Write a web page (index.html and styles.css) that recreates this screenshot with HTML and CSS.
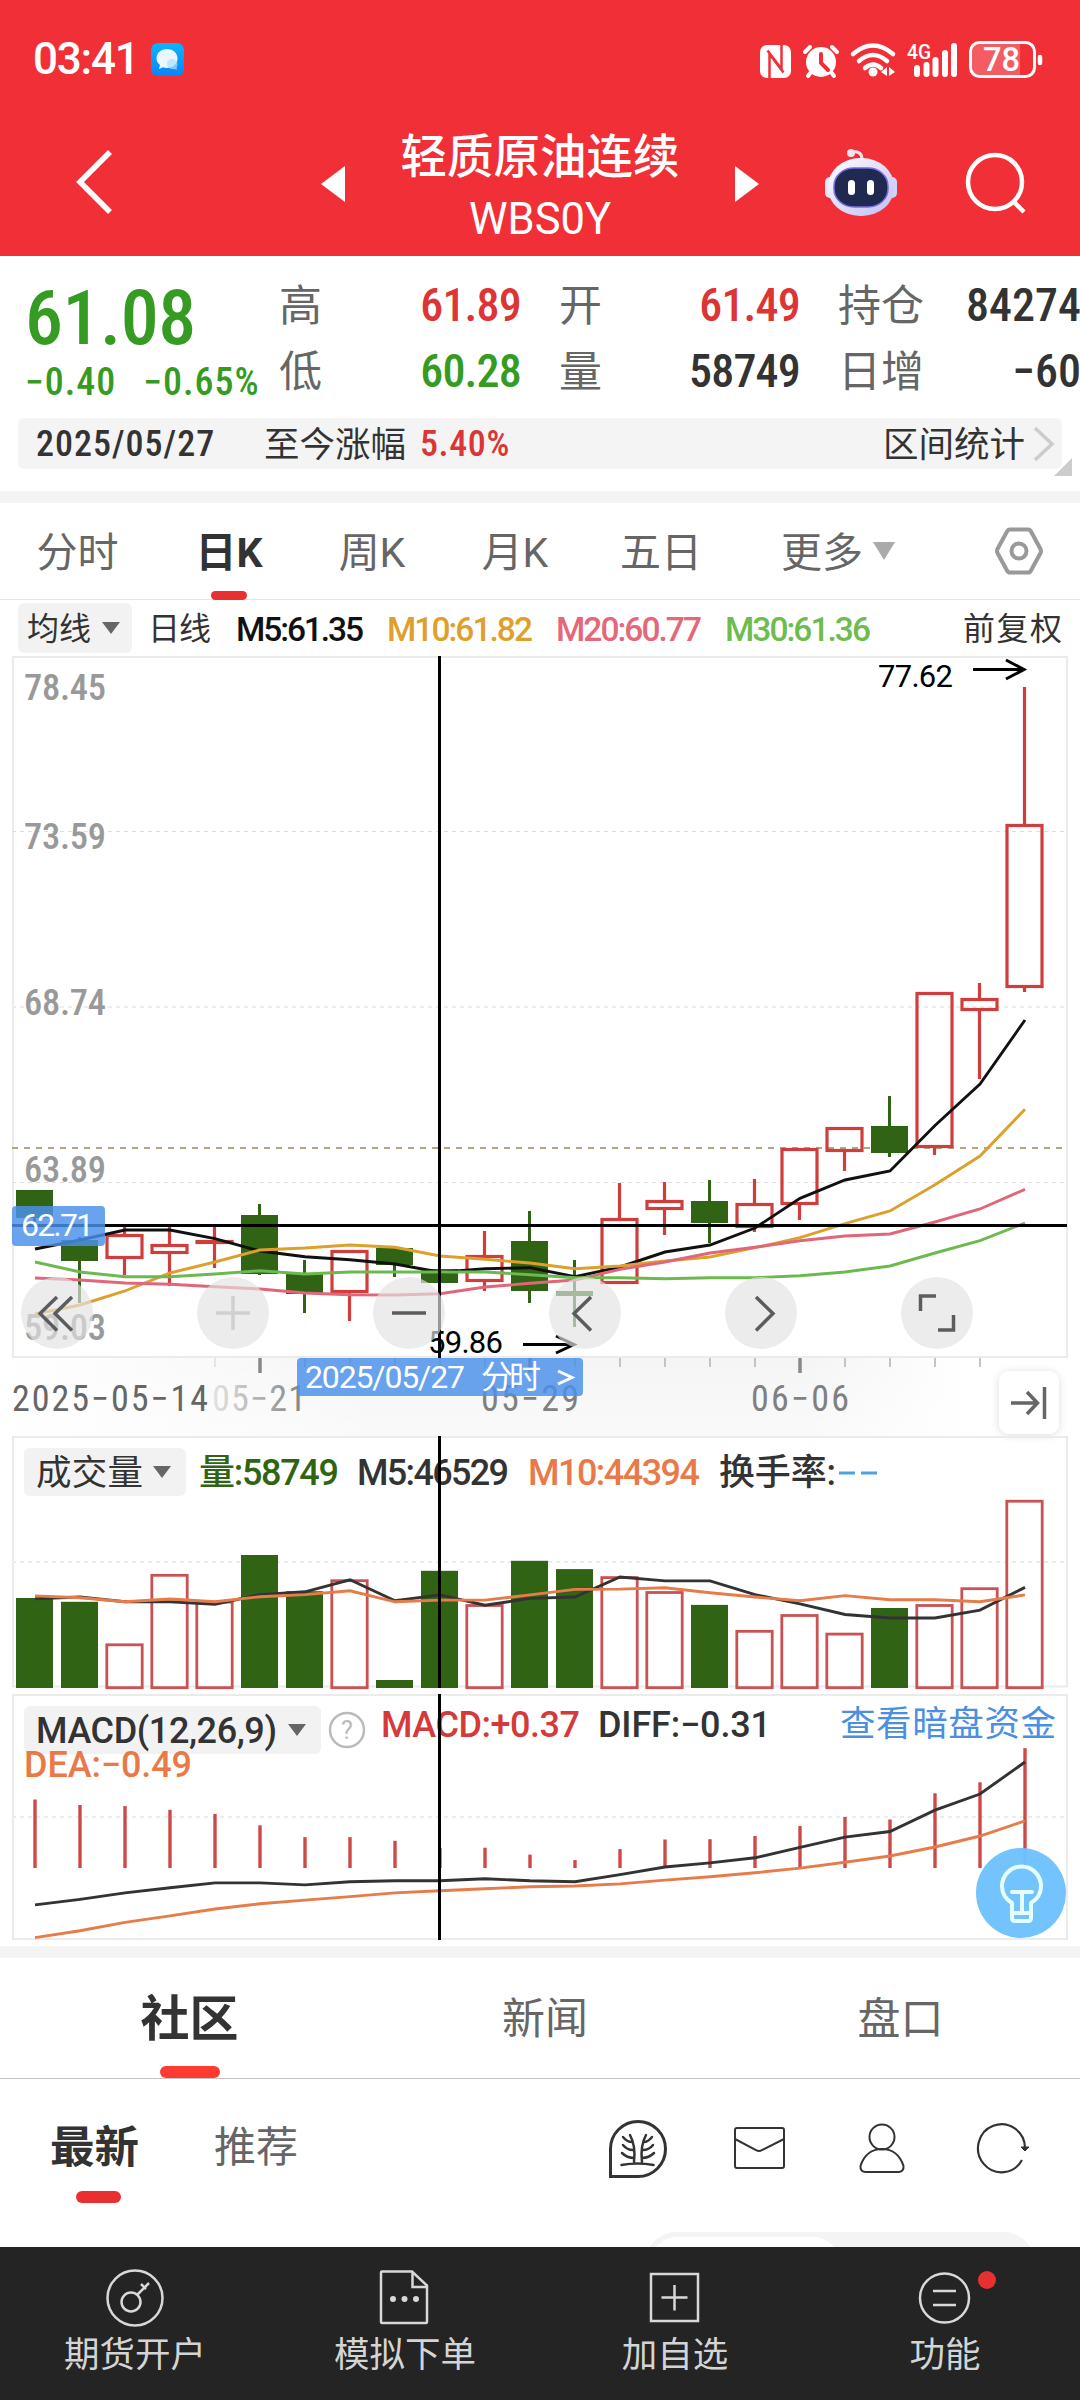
FILE: index.html
```html
<!DOCTYPE html>
<html lang="zh-CN">
  <head>
    <meta charset="UTF-8" />
    <meta name="viewport" content="width=device-width, initial-scale=1.0" />
    <title>轻质原油连续 WBS0Y</title>
    <link rel="stylesheet" href="styles.css">
  </head>
  <body>
    <header class="header">
      <div class="status-bar">
        <span class="clock">03:41</span>
        <svg class="app-icon" width="33" height="33" viewBox="0 0 33 33">
          <defs>
            <linearGradient id="appBg" x1="0" y1="0" x2="0" y2="1">
              <stop offset="0" stop-color="#0cb4fb" />
              <stop offset="1" stop-color="#0a84fb" />
            </linearGradient>
          </defs>
          <rect width="33" height="33" rx="7" fill="url(#appBg)" />
          <path d="M16 6c6 0 10.500 4 10.500 9.500S22 25 16 25c-1.500 0-3-.3-4-.7L8 26l1-4c-2.300-1.700-3.500-4-3.500-6.500C5.500 10 10 6 16 6z" fill="#e9f8ff" />
          <path d="M16 21c0-3 2-5 5-5s5.500 2 5.500 5c0 2-.5 3-1 4l.5 2-2.500-1C19 26.500 16 24 16 21z" fill="#a9e0fd" opacity=".7" />
        </svg>
        <svg class="status-icons" width="290" height="42" viewBox="756 36 290 42">
          <rect x="760" y="43" width="31" height="33" rx="7" fill="#fff" />
          <path d="M769.500 76V52l14 18.500M781.500 43v24l-14-18.500" fill="none" stroke="#f12f37" stroke-width="2.500" />
          <g fill="none" stroke="#fff" stroke-linecap="round">
            <circle cx="821" cy="60" r="15" fill="#fff" stroke="none" />
            <path d="M805 50l5-5M837 50l-5-5M811 70l-3 4M831 70l3 4" stroke-width="4" />
            <path d="M821 52v9l7 7" stroke="#f12f37" stroke-width="4" />
            <path d="M853 52q20-17 40 0M859 59q14-12 28 0M865 66q8-7 16 0" stroke-width="4.500" />
            <circle cx="873" cy="70" r="4.500" fill="#fff" stroke="none" />
            <path d="M881 70l6-5v9zM889 65l6 5-6 4z" fill="#fff" stroke="none" />
            <path d="M917 66v6M926.500 63v9M935.500 58v14M945 51v21M954 44v28" stroke-width="6" />
            <rect x="970.500" y="40.500" width="64" height="34" rx="9" stroke-width="3" />
            <path d="M1040 55v6" stroke-width="4.500" />
          </g>
          <path d="M979 42h41v31h-41c-5 0-7-3-7-7V49c0-4 2-7 7-7z" fill="#fff" opacity=".22" />
          <text x="907" y="57" font-size="21" textLength="24" lengthAdjust="spacingAndGlyphs" class="svg-white">4G</text>
          <text x="983" y="69" font-size="33" textLength="37" lengthAdjust="spacingAndGlyphs" class="svg-white">78</text>
        </svg>
      </div>
      <div class="title-bar">
        <svg class="back" width="40" height="68" viewBox="0 0 40 68"><path d="M36 4L6 34l30 30" fill="none" stroke="#fff" stroke-width="5.500" /></svg>
        <svg class="prev" width="24" height="36" viewBox="0 0 24 36"><path d="M24 0v36L0 18z" fill="#fff" /></svg>
        <div class="title">
          <div class="name">轻质原油连续</div>
          <div class="code">WBS0Y</div>
        </div>
        <svg class="next" width="24" height="36" viewBox="0 0 24 36"><path d="M0 0v36l24-18z" fill="#fff" /></svg>
        <svg class="robot" width="74" height="70" viewBox="0 0 74 70">
          <defs>
            <linearGradient id="head" x1="0" y1="0" x2="1" y2="1">
              <stop offset="0" stop-color="#ffffff" />
              <stop offset="1" stop-color="#c0bdf5" />
            </linearGradient>
          </defs>
          <path d="M27 6c6-3 11 0 11 6" fill="none" stroke="#f6dfe8" stroke-width="3" />
          <circle cx="27" cy="6" r="4" fill="#f3e3ef" />
          <rect x="1" y="30" width="10" height="21" rx="5" fill="#e6e6fb" />
          <rect x="63" y="30" width="10" height="21" rx="5" fill="#d3d1f8" />
          <rect x="4" y="11" width="66" height="58" rx="32" ry="28" fill="url(#head)" />
          <rect x="10" y="21" width="54" height="39" rx="20" ry="18" fill="#202a50" stroke="#7b6be0" stroke-width="1.500" />
          <rect x="24" y="33" width="7" height="15" rx="3.500" fill="#fff" />
          <rect x="43" y="33" width="7" height="15" rx="3.500" fill="#fff" />
        </svg>
        <svg class="search" width="62" height="64" viewBox="0 0 62 64"><g fill="none" stroke="#fff" stroke-width="4.500"><circle cx="30" cy="31" r="27" /><path d="M48 50l11 11" /></g></svg>
      </div>
    </header>

    <section class="quote">
      <div class="quote-grid">
        <div class="last">
          <div class="price num">61.08</div>
          <div class="change num"><span>−0.40</span><span>−0.65%</span></div>
        </div>
        <div class="pair"><span>高</span><b class="num red">61.89</b><span>低</span><b class="num green">60.28</b></div>
        <div class="pair"><span>开</span><b class="num red">61.49</b><span>量</span><b class="num">58749</b></div>
        <div class="pair wide"><span>持仓</span><b class="num">84274</b><span>日增</span><b class="num">−60</b></div>
      </div>
      <div class="range-bar">
        <span class="range-date num">2025/05/27</span>
        <span class="range-label">至今涨幅</span>
        <span class="range-value num red">5.40%</span>
        <span class="range-stat">区间统计</span>
        <svg width="22" height="36" viewBox="0 0 22 36"><path d="M2 2l17 16L2 34" fill="none" stroke="#ccc" stroke-width="3.500" /></svg>
        <i class="corner"></i>
      </div>
    </section>

    <nav class="period-tabs">
      <span>分时</span>
      <span class="active">日K</span>
      <span>周K</span>
      <span>月K</span>
      <span>五日</span>
      <span>更多<i class="caret"></i></span>
      <svg width="50" height="50" viewBox="0 0 50 50"><g fill="none" stroke="#999" stroke-width="4"><path d="M16 3.500h18q2 0 3 2L46.500 23q1 2 0 4L37 44.500q-1 2-3 2H16q-2 0-3-2L3.500 27q-1-2 0-4L13 5.500q1-2 3-2z" /><circle cx="25" cy="25" r="7.500" /></g></svg>
    </nav>

    <section class="charts">
      <svg class="legend" viewBox="0 600 1080 56">
        <rect x="18" y="603" width="114" height="50" rx="6" class="chip" />
        <text x="27" y="640" font-size="32" textLength="64" class="dark">均线</text>
        <path d="M102 622h18l-9 12z" class="caret-fill" />
        <text x="148" y="640" font-size="32" textLength="63" class="dark">日线</text>
        <text x="236" y="641" textLength="128" class="t34 black">M5:61.35</text>
        <text x="387" y="641" textLength="146" class="t34 gold">M10:61.82</text>
        <text x="556" y="641" textLength="146" class="t34 pink">M20:60.77</text>
        <text x="725" y="641" textLength="146" class="t34 lime">M30:61.36</text>
        <text x="963" y="640" font-size="32" textLength="99" class="dark">前复权</text>
      </svg>

      <svg class="pane" viewBox="0 656 1080 780">
        <defs>
          <linearGradient id="axisFade" x1="0" x2="1" y1="0" y2="0">
            <stop offset="0" stop-color="#fff" />
            <stop offset=".35" stop-color="#f5f5f5" />
            <stop offset=".75" stop-color="#f5f5f5" />
            <stop offset=".9" stop-color="#fff" />
          </linearGradient>
          <linearGradient id="axisDown" x1="0" x2="0" y1="0" y2="1">
            <stop offset="0" stop-color="#fff" stop-opacity="0" />
            <stop offset="1" stop-color="#fff" stop-opacity=".5" />
          </linearGradient>
          <linearGradient id="dateFade" x1="0" x2="1" y1="0" y2="0">
            <stop offset="0" stop-color="#e4e4e4" />
            <stop offset="1" stop-color="#808080" />
          </linearGradient>
          <filter id="soft" x="-30%" y="-30%" width="160%" height="160%"><feDropShadow dx="0" dy="1" stdDeviation="4" flood-color="#000" flood-opacity=".14" /></filter>
        </defs>
        <rect x="0" y="1358" width="1080" height="78" fill="url(#axisFade)" />
        <rect x="0" y="1358" width="1080" height="78" fill="url(#axisDown)" />
        <rect x="13" y="657" width="1054" height="700" class="frame" />
        <path d="M12 831.500H1066M12 1182.500H1066" class="grid-line" />
        <path d="M12 1007H1066" class="grid-line thick" />
        <path d="M12 1148H1066" class="prev-close" />
        <g class="scale">
          <text x="24" y="700" textLength="82">78.45</text>
          <text x="24" y="849" textLength="82">73.59</text>
          <text x="24" y="1015" textLength="82">68.74</text>
          <text x="24" y="1182" textLength="82">63.89</text>
          <text x="24" y="1340" textLength="82">59.03</text>
        </g>
        <g id="candles"></g>
        <g id="price-lines"></g>
        <g class="mark">
          <text x="878" y="687" textLength="75">77.62</text>
          <path d="M973 669.500h50M1006 660l18 9.500-18 9.500" />
          <text x="428" y="1353" textLength="75">59.86</text>
          <path d="M523 1344.500h50M556 1336l18 8.500-18 8.500" />
        </g>
        <g id="ticks"></g>
        <g class="dates">
          <text x="12" y="1411" textLength="196" fill="#666">2025−05−14</text>
          <text x="212" y="1411" textLength="94" fill="url(#dateFade)">05−21</text>
          <text x="481" y="1411" textLength="98">05−29</text>
          <text x="751" y="1411" textLength="98">06−06</text>
        </g>
        <path d="M12 1225.500H1067" class="cross" />
        <path d="M439.500 656V1358" class="cross" />
        <rect x="12" y="1206" width="93" height="40" rx="4" class="tag" />
        <text x="21" y="1236" textLength="73" class="tag-text">62.71</text>
        <rect x="297" y="1358" width="286" height="38" rx="4" class="tag" />
        <text x="305" y="1388" textLength="160" class="tag-text">2025/05/27</text>
        <text x="481" y="1388" textLength="60" class="tag-text">分时</text>
        <path d="M558 1371l14 6.500-14 6.500" fill="none" stroke="#fff" stroke-width="3" />
        <g class="round">
          <circle cx="57" cy="1313" r="36" /><circle cx="233" cy="1313" r="36" /><circle cx="409" cy="1313" r="36" />
          <circle cx="585" cy="1313" r="36" /><circle cx="761" cy="1313" r="36" /><circle cx="937" cy="1313" r="36" />
        </g>
        <g class="round-icon">
          <path d="M57 1297l-17 16.500 17 17M72 1297l-17 16.500 17 17" />
          <path d="M216 1313h34M233 1296v34" stroke="#d0d0d0" />
          <path d="M392 1313h34" />
          <path d="M591 1297l-17 16.500 17 17M756 1297l17 16.500-17 17" />
          <path d="M936 1296h-15.500v15M938 1330h15.500v-15" />
        </g>
        <rect x="999" y="1371" width="60" height="63" rx="11" fill="#fff" filter="url(#soft)" />
        <path d="M1011 1403h26M1027 1392l10.500 11-10.500 11M1044.500 1387v32" fill="none" stroke="#666" stroke-width="3.500" />
      </svg>

      <svg class="pane" viewBox="0 1436 1080 254">
        <path d="M13 1436.500V1687M1067 1436.500V1687M12 1437H1068M12 1686.500H1068" class="frame" />
        <path d="M12 1562H1066" class="grid-line thick" />
        <rect x="24" y="1448" width="162" height="48" rx="6" class="chip" />
        <text x="36" y="1485" font-size="35.500" textLength="107" class="dark">成交量</text>
        <path d="M153 1466h18l-9 12z" class="caret-fill" />
        <text x="199" y="1485" textLength="140" class="t36 deep">量:58749</text>
        <text x="357" y="1485" textLength="152" class="t36 dark">M5:46529</text>
        <text x="528" y="1485" textLength="172" class="t36 orange">M10:44394</text>
        <text x="719" y="1485" textLength="117" class="t36 dark">换手率:</text>
        <path d="M839 1473h16M861 1473h16" stroke="#4aa3df" stroke-width="3" />
        <g id="volume"></g>
        <path d="M439.500 1436V1688" class="cross" />
      </svg>

      <svg class="pane" viewBox="0 1690 1080 256">
        <path d="M13 1694V1939M1067 1694V1939M12 1695H1068M12 1939H1068" class="frame" />
        <path d="M12 1817H1066" class="grid-line thick" />
        <rect x="24" y="1706" width="297" height="48" rx="6" class="chip" />
        <text x="36" y="1743" textLength="241" class="t36 dark">MACD(12,26,9)</text>
        <path d="M288 1724h18l-9 12z" class="caret-fill" />
        <circle cx="347" cy="1730" r="17" fill="none" stroke="#bbb" stroke-width="2.500" />
        <text x="341" y="1739" font-size="25" fill="#bbb">?</text>
        <text x="381" y="1737" textLength="199" class="t36 crimson">MACD:+0.37</text>
        <text x="598" y="1737" textLength="173" class="t36 dark">DIFF:−0.31</text>
        <text x="840" y="1736" font-size="35.500" textLength="216" class="link">查看暗盘资金</text>
        <text x="24" y="1777" textLength="168" class="t36 orange">DEA:−0.49</text>
        <g id="macd"></g>
        <path d="M439.500 1694V1940" class="cross" />
        <circle cx="1021" cy="1893" r="45" fill="#6ec1ff" fill-opacity=".97" />
        <g fill="none" stroke="#e6ffff" stroke-width="4" stroke-linejoin="round" stroke-linecap="round">
          <path d="M1012 1918v-15q-10-6-10-17a19.500 19.500 0 0 1 39 0q0 11-10 17v15q0 3-3 3h-13q-3 0-3-3z" />
          <path d="M1012 1892h20M1022 1892v20M1013 1913h17" />
        </g>
      </svg>
    </section>

    <nav class="main-tabs">
      <span class="active">社区</span>
      <span>新闻</span>
      <span>盘口</span>
    </nav>

    <section class="feed">
      <div class="feed-bar">
        <span class="active">最新</span>
        <span>推荐</span>
        <div class="feed-icons">
          <svg width="60" height="60" viewBox="0 0 60 60"><g fill="none" stroke="#333" stroke-linecap="round"><path d="M2.500 57.500V30A27.500 27.500 0 1 1 30 57.500z" stroke-width="3" stroke-linecap="butt" /><path d="M26 43q2-16-4-27M34 43q-2-16 4-27M13.500 46q16-3 32 0M15 18q4 5 9 5M15 26q4 5 10 5M14 34q5 5 12 5M44 18q-4 5-8 5M45 26q-4 5-10 5M46 34q-5 5-12 5" stroke-width="2.500" /></g></svg>
          <svg width="54" height="60" viewBox="0 0 54 60"><g fill="none" stroke="#333" stroke-width="2"><rect x="2" y="9" width="49" height="40" rx="2" /><path d="M2 20l21 11q3 2 6 0l22-11" /></g></svg>
          <svg width="48" height="60" viewBox="0 0 48 60"><g fill="none" stroke="#333" stroke-width="2"><circle cx="24" cy="18" r="12.500" /><path d="M2.500 47C6 36 14 30 24 30s18 6 21.500 17c.5 4-2 6-5 6h-33c-3 0-5.500-2-5-6z" /></g></svg>
          <svg width="54" height="60" viewBox="0 0 54 60"><path d="M45 41A23.500 24 0 1 1 48 29" fill="none" stroke="#333" stroke-width="2.200" /><path d="M44 28h8l-4 4z" fill="#333" stroke="#333" stroke-linejoin="round" /></svg>
        </div>
      </div>
      <div class="switch"><i></i></div>
    </section>

    <footer class="bottom-nav">
      <a>
        <svg width="60" height="60" viewBox="0 0 60 60"><g fill="none" stroke="#d8d8d8" stroke-width="2.500"><circle cx="30" cy="30" r="27.500" /><circle cx="26" cy="34" r="9.500" /><path d="M32 27l12-12M36 16l5 5" /></g></svg>
        期货开户
      </a>
      <a>
        <svg width="60" height="60" viewBox="0 0 60 60"><g fill="none" stroke="#d8d8d8" stroke-width="2.500"><path d="M7 3.500h30l15 14V54q0 1-1 1H7q-1 0-1-1V4.500q0-1 1-1zM37.500 4v15H52" /></g><g fill="#d8d8d8"><circle cx="18" cy="31" r="3" /><circle cx="29.500" cy="31" r="3" /><circle cx="41" cy="31" r="3" /></g></svg>
        模拟下单
      </a>
      <a>
        <svg width="60" height="60" viewBox="0 0 60 60"><g fill="none" stroke="#d8d8d8" stroke-width="2.500"><rect x="6" y="6" width="47" height="47" /><path d="M16.500 29.500h26M29.500 17v25.500" /></g></svg>
        加自选
      </a>
      <a>
        <svg class="menu-icon" width="60" height="60" viewBox="0 0 60 60"><g fill="none" stroke="#d8d8d8" stroke-width="2.500"><circle cx="29.500" cy="30" r="24.500" /><path d="M18 23h23M18 37h23" /></g><circle cx="72" cy="12" r="9" fill="#e93030" /></svg>
        功能
      </a>
    </footer>

    <script src="chart.js"></script>
  </body>
</html>
```
FILE: styles.css
```css
body {
  margin: 0;
  width: 1080px;
  height: 2400px;
  overflow: hidden;
  background: #fff;
  color: #333;
  font-family: Roboto, "Noto Sans CJK SC", sans-serif;
}
svg {
  display: block;
  overflow: visible;
}
.num {
  font-stretch: 75%;
  font-weight: 500;
}
.red {
  color: #dc3535;
}
.green {
  color: #359b22;
}

/* header */
.header {
  height: 256px;
  background: #f12f37;
  color: #fff;
}
.status-bar {
  display: flex;
  align-items: center;
  height: 118px;
  box-sizing: border-box;
  padding: 0 34px 0 33px;
}
.clock {
  width: 118px;
  font-size: 44px;
  font-weight: 500;
  letter-spacing: -1.2px;
}
.status-icons {
  margin-left: auto;
}
.svg-white {
  fill: #fff;
  font-weight: 500;
}
.title-bar {
  display: flex;
  align-items: center;
  height: 138px;
  padding-left: 74px;
}
.back {
  margin-top: -10px;
}
.prev {
  margin: -6px 0 0 207px;
}
.title {
  width: 390px;
  text-align: center;
}
.name {
  margin-top: -1px;
  font-size: 46.5px;
  font-weight: 500;
  line-height: 66px;
}
.code {
  font-size: 43.5px;
  line-height: 59px;
}
.next {
  margin-top: -6px;
}
.robot {
  margin: -10px 0 0 65px;
}
.search {
  margin: -9px 0 0 67px;
}

/* quote */
.quote {
  height: 235px;
  border-bottom: 12px solid #f4f4f4;
}
.quote-grid {
  display: grid;
  grid-template-columns: 254px 280px 279px 268px;
  height: 162px;
  padding-left: 25px;
}
.last {
  color: #359b22;
  white-space: nowrap;
}
.price {
  margin-top: 18px;
  font-size: 76px;
  line-height: 88px;
  letter-spacing: -.5px;
}
.change {
  display: flex;
  gap: 27px;
  font-size: 38px;
  line-height: 40px;
  letter-spacing: 1px;
}
.pair {
  display: grid;
  grid-template-columns: 1fr auto;
  grid-auto-rows: 66px;
  padding: 16px 38px 0 0;
  align-items: center;
  color: #333;
}
.pair span {
  margin-top: -6px;
  color: #666;
  font-size: 43px;
}
.pair b {
  text-align: right;
  font-size: 46px;
  letter-spacing: -.8px;
}
.pair.wide {
  padding-right: 25px;
}
.pair.wide b {
  letter-spacing: 0;
}
.pair .red {
  color: #dc3535;
}
.pair .green {
  color: #359b22;
}
.range-bar {
  position: relative;
  display: flex;
  align-items: center;
  width: 1044px;
  height: 51px;
  margin-left: 18px;
  border-radius: 6px;
  background: #f4f4f4;
  font-size: 35.5px;
}
.range-date {
  width: 227px;
  padding-left: 18px;
  margin-right: 1px;
  font-size: 36px;
  letter-spacing: 1px;
}
.range-label {
  margin-top: -4px;
}
.range-value {
  margin-left: 14px;
  font-size: 36px;
  letter-spacing: .6px;
}
.range-stat {
  margin: -4px 8px 0 auto;
}
.range-bar svg {
  margin-right: 7px;
}
.corner {
  position: absolute;
  right: -10px;
  bottom: -7px;
  border-left: 18px solid transparent;
  border-bottom: 18px solid #ccc;
}

/* period tabs */
.period-tabs {
  display: grid;
  grid-template-columns: 155px 148px 138px 148px 144px 210px 135px;
  height: 96px;
  border-bottom: 1px solid #e6e6e6;
  justify-items: center;
  align-items: center;
  color: #666;
  font-size: 41px;
}
.period-tabs span {
  margin-top: -5px;
}
.period-tabs .active {
  display: flex;
  flex-direction: column;
  align-items: center;
  color: #333;
  font-weight: 700;
}
.period-tabs .active::after {
  content: "";
  width: 36px;
  height: 9px;
  margin-bottom: -21px;
  margin-top: 12px;
  border-radius: 5px;
  background: #e93030;
}
.period-tabs svg {
  margin-left: 16px;
}
.caret {
  display: inline-block;
  margin-left: 10px;
  vertical-align: 7px;
  border: 11px solid transparent;
  border-top: 18px solid #aaa;
  border-bottom: 0;
}

/* charts */
.charts {
  height: 1346px;
  border-bottom: 12px solid #f4f4f4;
}
.charts svg {
  width: 1080px;
}
.legend {
  height: 56px;
}
.t34 {
  font-size: 33.5px;
  font-weight: 500;
}
.t36 {
  font-size: 36px;
  font-weight: 500;
}
.black { fill: #111; }
.dark { fill: #333; }
.gold { fill: #dfa02b; }
.pink { fill: #e4677a; }
.lime { fill: #6dbc4d; }
.deep { fill: #306414; }
.orange { fill: #e97a47; }
.crimson { fill: #d43a3a; }
.link { fill: #4a8fe0; }
.chip { fill: #f2f2f2; }
.caret-fill { fill: #666; }
.frame {
  fill: none;
  stroke: #ebebeb;
  stroke-width: 2;
}
.grid-line {
  fill: none;
  stroke: #ddd;
  stroke-width: 1;
  stroke-dasharray: 4 4;
}
.grid-line.thick {
  stroke: #ececec;
  stroke-width: 2;
}
.prev-close {
  stroke: #b3a57c;
  stroke-width: 2;
  stroke-dasharray: 6 6;
}
.scale text {
  fill: #999;
  font-size: 36.5px;
  font-weight: 500;
  font-stretch: 75%;
}
.mark {
  fill: #000;
  font-size: 31px;
}
.mark path {
  fill: none;
  stroke: #000;
  stroke-width: 3;
}
.dates {
  fill: #808080;
  font-size: 36px;
  font-stretch: 75%;
}
.cross {
  stroke: #000;
  stroke-width: 3;
}
.tag {
  fill: #4a90ea;
  fill-opacity: .83;
}
.tag-text {
  fill: #fff;
  font-size: 32px;
}
.round {
  fill: rgba(227, 227, 227, .67);
}
.round-icon {
  fill: none;
  stroke: #5c5c5c;
  stroke-width: 3.5;
}
.up {
  fill: none;
  stroke: #cf3e3c;
  stroke-width: 3.2;
}
.volume-up {
  fill: none;
  stroke: #cb5252;
  stroke-width: 2.8;
}
.wick-up {
  stroke: #cf3e3c;
  stroke-width: 3.2;
}
.down {
  fill: #306414;
}
.wick-down {
  stroke: #306414;
  stroke-width: 3;
}
.hist {
  stroke: #cf4848;
  stroke-width: 3.4;
}
.series {
  fill: none;
  stroke-width: 2.9;
}

/* community */
.main-tabs {
  display: grid;
  grid-template-columns: 379px 332px 369px;
  height: 120px;
  border-bottom: 1px solid #c4c4c4;
  justify-items: center;
  color: #666;
  font-size: 43px;
  line-height: 123px;
}
.main-tabs span:last-child {
  padding-left: 10px;
}
.main-tabs .active {
  position: relative;
  height: 120px;
  color: #333;
  font-size: 49px;
  font-weight: 700;
}
.main-tabs .active::after {
  content: "";
  position: absolute;
  left: 20px;
  bottom: 0;
  width: 60px;
  height: 12px;
  border-radius: 6px;
  background: #fd3b30;
}
.feed {
  height: 168px;
  overflow: hidden;
}
.feed-bar {
  display: flex;
  align-items: center;
  height: 133px;
  padding-left: 50px;
  color: #666;
  font-size: 42px;
}
.feed-bar span {
  margin-top: -5px;
}
.feed-bar .active {
  position: relative;
  margin-right: 75px;
  color: #333;
  font-size: 44.5px;
  font-weight: 700;
}
.feed-bar .active::after {
  content: "";
  position: absolute;
  left: 26px;
  bottom: -27px;
  width: 45px;
  height: 12px;
  border-radius: 6px;
  background: #e93030;
}
.feed-icons {
  display: flex;
  gap: 71px;
  margin-left: auto;
  padding: 7px 49px 0 0;
}
.feed-icons svg:first-child {
  margin-right: -6px;
}
.switch {
  width: 390px;
  height: 64px;
  margin: 20px 0 0 645px;
  border-radius: 32px;
  background: #f4f4f4;
}
.switch i {
  display: block;
  width: 190px;
  height: 54px;
  border: 5px solid #f4f4f4;
  border-radius: 32px;
  background: #fff;
}

/* bottom nav */
.bottom-nav {
  display: grid;
  grid-template-columns: repeat(4, 1fr);
  height: 153px;
  background: #242424;
  color: #d4d4d4;
  font-size: 35.5px;
}
.bottom-nav a {
  display: flex;
  flex-direction: column;
  align-items: center;
  padding-top: 21px;
  line-height: 54px;
}
```
FILE: chart.js
```js
// one column every 45px, first one centred at 34.5
const colX = (i) => 34.5 + i * 45;

// [direction, high, body top, body bottom, low]
const candles = [
  ["d", 1190, 1190, 1218, 1222],
  ["d", 1237, 1240, 1261, 1303],
  ["u", 1226, 1234, 1259, 1275],
  ["u", 1226, 1244, 1254, 1286],
  ["u", 1227, 1240, 1244, 1268],
  ["d", 1204, 1215, 1274, 1275],
  ["d", 1260, 1274, 1294, 1313],
  ["u", 1250, 1250, 1293, 1321],
  ["d", 1248, 1248, 1265, 1277],
  ["d", 1269, 1269, 1283, 1283],
  ["u", 1231, 1255, 1282, 1291],
  ["d", 1211, 1241, 1291, 1303],
  ["d", 1260, 1291, 1296, 1327],
  ["u", 1183, 1218, 1284, 1284],
  ["u", 1182, 1200, 1210, 1235],
  ["d", 1180, 1201, 1223, 1243],
  ["u", 1179, 1203, 1228, 1232],
  ["u", 1148, 1148, 1205, 1220],
  ["u", 1127, 1127, 1152, 1171],
  ["d", 1096, 1126, 1153, 1157],
  ["u", 992, 992, 1148, 1155],
  ["u", 983, 998, 1011, 1079],
  ["u", 687, 824, 988, 992],
];

const m5 = [1249, 1240, 1230, 1230, 1238.7, 1251, 1256.7, 1259.7, 1264, 1272.3, 1268.7, 1267.7, 1276.7, 1267, 1252, 1245, 1228, 1198.3, 1180, 1171, 1125.5, 1084, 1020];
const m10 = [1314, 1305, 1291, 1273, 1262, 1250, 1248, 1245, 1247.3, 1256, 1259.3, 1263, 1268.7, 1266, 1261, 1257, 1247.7, 1237.7, 1223.7, 1211, 1184.7, 1156, 1109.3];
const m20 = [1278, 1280, 1283, 1284.3, 1286.7, 1289, 1293, 1294.7, 1295, 1293.7, 1287, 1283.3, 1280, 1269.3, 1262, 1253, 1247.3, 1240.7, 1236, 1234, 1222, 1209, 1189.3];
const m30 = [1262, 1272, 1276.7, 1276.7, 1274, 1270.7, 1274, 1272, 1272, 1272, 1272, 1274.7, 1277.7, 1277.7, 1278.7, 1277.7, 1277.7, 1275.7, 1272, 1266, 1253, 1240.7, 1223];

const volumeTop = [1598, 1601.8, 1643.5, 1574, 1600.8, 1555, 1591.2, 1579.4, 1680, 1570.8, 1604.2, 1560.8, 1569.1, 1576.3, 1591.2, 1604.9, 1630, 1614.2, 1632.8, 1608, 1604.2, 1587.4, 1499.9];
const volM5 = [1598.7, 1597, 1601.8, 1601.8, 1604.2, 1594.6, 1591.8, 1579.8, 1600.8, 1594.9, 1605.2, 1598.4, 1597, 1577, 1580.9, 1580.9, 1594.6, 1603.9, 1614.5, 1618, 1618, 1610.1, 1587.4];
const volM10 = [1595.9, 1597.7, 1601.8, 1599, 1601.8, 1596.7, 1594.6, 1590.8, 1601.8, 1600.1, 1600.1, 1594.9, 1589.4, 1589.1, 1587.7, 1592.8, 1597, 1600.8, 1595.6, 1599.8, 1599.8, 1601.8, 1594.9];

const histTop = [1799.5, 1805, 1806.1, 1809.8, 1813.9, 1825.3, 1837.1, 1837.1, 1840.8, 1848, 1847.7, 1854.6, 1860.1, 1849.1, 1839.5, 1839.2, 1836, 1826, 1817, 1819.5, 1793.3, 1782.3, 1748.2];
const diff = [1904.9, 1899.4, 1892.9, 1887.7, 1882.9, 1882.9, 1884.9, 1881.8, 1880.8, 1880.8, 1878.7, 1880.8, 1881.8, 1874.6, 1867, 1862.9, 1857.8, 1847.4, 1837.1, 1831.5, 1810.2, 1794, 1762];
const dea = [1937.6, 1930.7, 1922.4, 1915.9, 1909, 1903.8, 1900.1, 1896.6, 1892.9, 1890.8, 1888.7, 1886.7, 1886, 1883.9, 1880.1, 1876.7, 1872.8, 1868.1, 1862.2, 1856, 1847, 1836, 1820.9];

function series(values, color) {
  const points = values.map((y, i) => `${colX(i) + 0.5},${y}`).join(" ");
  return `<polyline class="series" stroke="${color}" points="${points}" />`;
}

function body(i, dir, top, bottom, upClass, inset) {
  if (dir === "d") {
    return `<rect class="down" x="${colX(i) - 18.5}" y="${top}" width="37" height="${bottom - top}" />`;
  }
  return `<rect class="${upClass}" x="${colX(i) - 19 + inset}" y="${top + inset}" width="${38 - inset * 2}" height="${bottom - top - inset * 2}" />`;
}

let html = "";
candles.forEach(([dir, high, top, bottom, low], i) => {
  const cls = dir === "u" ? "wick-up" : "wick-down";
  html += `<path class="${cls}" d="M${colX(i)} ${high}V${top}M${colX(i)} ${bottom}V${low}" />`;
  html += body(i, dir, top, bottom, "up", 1.5);
});
document.getElementById("candles").innerHTML = html;
document.getElementById("price-lines").innerHTML =
  series(m5, "#111") + series(m10, "#dca02c") + series(m20, "#e06678") + series(m30, "#6cb950");

html = "";
for (let i = 4; i < 22; i++) {
  const major = i % 6 === 5;
  html += `<path d="M${colX(i) + 0.5} 1358v${major ? 15 : 9}" stroke="${major ? "#888" : i === 4 ? "#e6e6e6" : "#c4c4c4"}" stroke-width="${major ? 3.5 : 2}" />`;
}
document.getElementById("ticks").innerHTML = html;

html = "";
volumeTop.forEach((top, i) => {
  html += body(i, candles[i][0], top, candles[i][0] === "u" ? 1689 : 1688, "volume-up", 1.3);
});
document.getElementById("volume").innerHTML = html + series(volM5, "#333") + series(volM10, "#e67c4a");

html = "";
histTop.forEach((top, i) => {
  html += `<path class="hist" d="M${colX(i) + 0.5} ${top}V1868" />`;
});
document.getElementById("macd").innerHTML = html + series(diff, "#333") + series(dea, "#e67c4a");
```
